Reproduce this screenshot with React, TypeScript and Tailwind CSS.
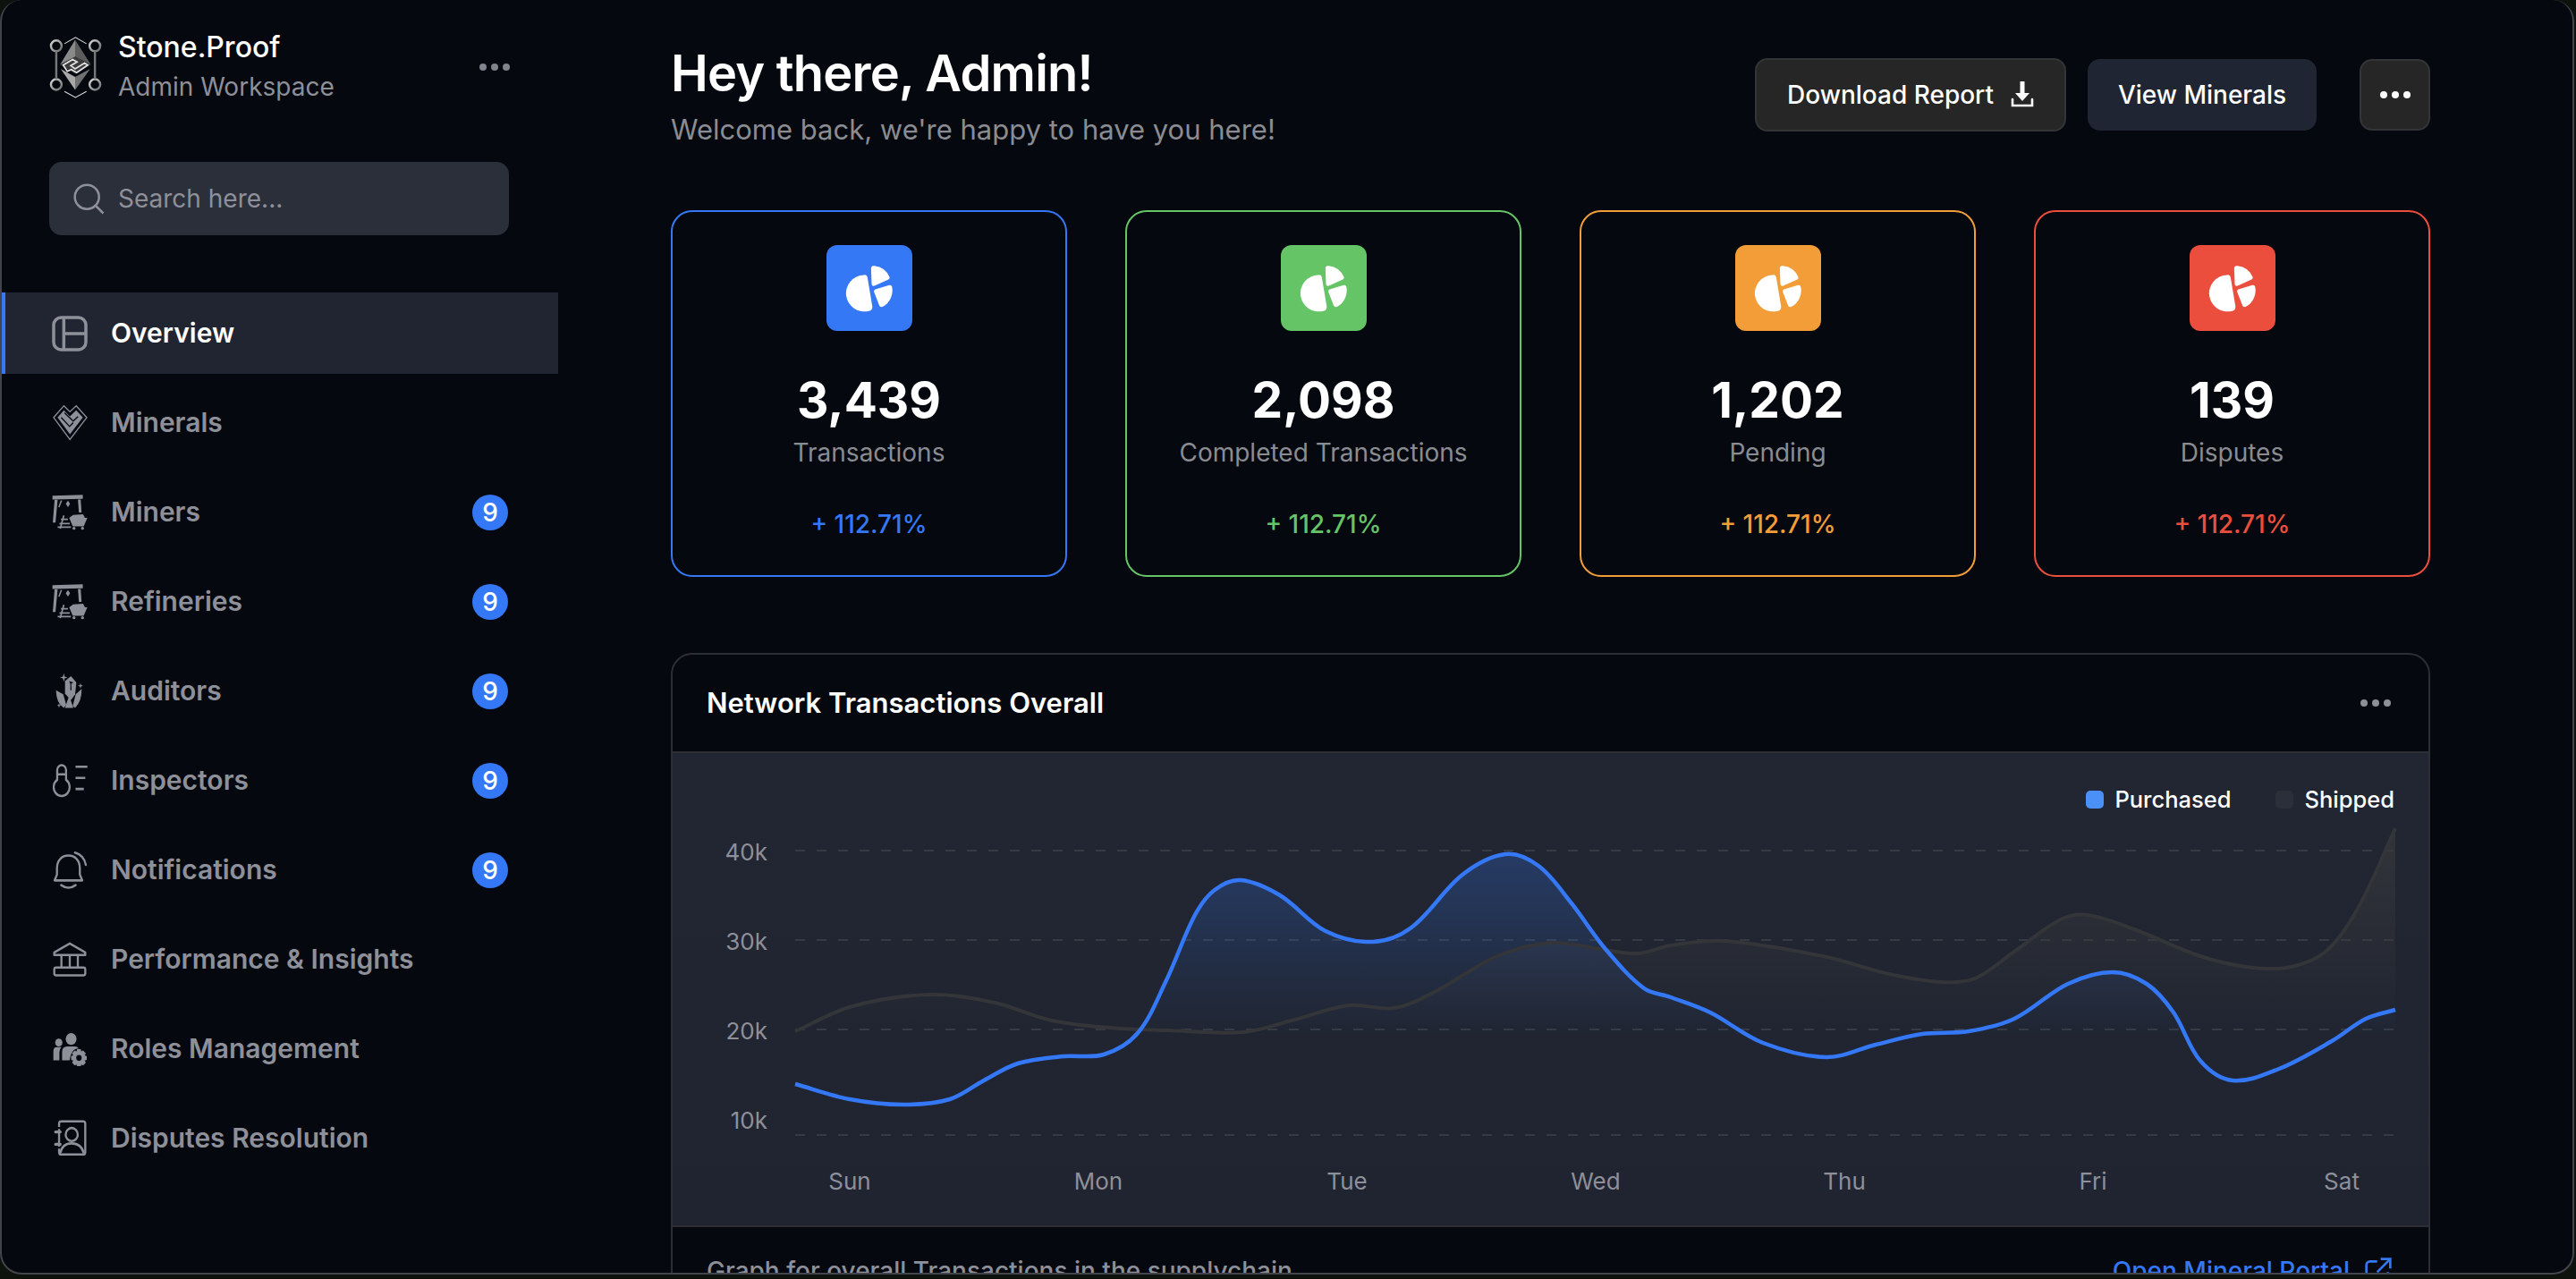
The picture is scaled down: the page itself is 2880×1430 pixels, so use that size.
import { ReactNode } from 'react'

const bluePoints = [
  [889, 1212], [950, 1229], [1010, 1235], [1062, 1229], [1100, 1208], [1138, 1189], [1189, 1181], [1234, 1179],
  [1272, 1155], [1304, 1096], [1336, 1023], [1358, 995], [1387, 984], [1431, 1001], [1482, 1041], [1535, 1053],
  [1578, 1037], [1635, 978], [1683, 955], [1720, 968], [1757, 1010], [1794, 1060], [1838, 1105], [1868, 1115],
  [1912, 1132], [1971, 1166], [2042, 1182], [2097, 1168], [2149, 1156], [2201, 1153], [2252, 1139], [2312, 1100],
  [2362, 1087], [2400, 1100], [2430, 1132], [2460, 1186], [2496, 1208], [2548, 1195], [2607, 1164], [2645, 1139],
  [2678, 1129],
]

const grayPoints = [
  [889, 1153], [953, 1125], [1042, 1112], [1112, 1121], [1176, 1141], [1240, 1149], [1304, 1152], [1390, 1154],
  [1444, 1141], [1508, 1124], [1559, 1127], [1604, 1109], [1674, 1069], [1736, 1054], [1794, 1062], [1831, 1066],
  [1868, 1057], [1927, 1052], [2038, 1069], [2112, 1089], [2171, 1098], [2208, 1094], [2252, 1064], [2304, 1028],
  [2334, 1023], [2386, 1039], [2460, 1069], [2511, 1081], [2556, 1082], [2600, 1064], [2637, 1014], [2678, 926],
]

// tangents scaled by segment length so uneven point spacing doesn't kink the line
function smoothPath(pts: number[][]) {
  let d = `M${pts[0][0]} ${pts[0][1]}`
  for (let i = 0; i < pts.length - 1; i++) {
    const p0 = pts[i - 1] || pts[i]
    const p1 = pts[i]
    const p2 = pts[i + 1]
    const p3 = pts[i + 2] || p2
    const len = Math.hypot(p2[0] - p1[0], p2[1] - p1[1]) / 3
    const l1 = Math.hypot(p2[0] - p0[0], p2[1] - p0[1]) || 1
    const l2 = Math.hypot(p3[0] - p1[0], p3[1] - p1[1]) || 1
    const c1x = p1[0] + ((p2[0] - p0[0]) / l1) * len
    const c1y = p1[1] + ((p2[1] - p0[1]) / l1) * len
    const c2x = p2[0] - ((p3[0] - p1[0]) / l2) * len
    const c2y = p2[1] - ((p3[1] - p1[1]) / l2) * len
    d += ` C${c1x} ${c1y} ${c2x} ${c2y} ${p2[0]} ${p2[1]}`
  }
  return d
}

function Dots({ className }: { className: string }) {
  return (
    <span className={`flex items-center gap-[5px] ${className}`}>
      <span className="size-[8px] rounded-full bg-current" />
      <span className="size-[8px] rounded-full bg-current" />
      <span className="size-[8px] rounded-full bg-current" />
    </span>
  )
}

function Logo() {
  return (
    <svg width="60" height="72" viewBox="75 60 170 205" className="shrink-0" fill="none">
      <defs>
        <linearGradient id="ring" x1="0" y1="0" x2="1" y2="1">
          <stop offset="0" stopColor="#d8d8d8" />
          <stop offset="1" stopColor="#6b6b6b" />
        </linearGradient>
      </defs>
      <g stroke="url(#ring)" strokeWidth="7">
        <circle cx="100" cy="95" r="17" />
        <circle cx="223" cy="95" r="17" />
        <circle cx="100" cy="218" r="17" />
        <circle cx="223" cy="218" r="17" />
      </g>
      <path d="M100 112V201M223 112V201" stroke="#777" strokeWidth="7" />
      <path d="M126 88L161 68L196 88M126 240L161 259L196 240" stroke="#ddd" strokeWidth="3" />
      <path d="M160 76L112 155L160 130Z" fill="#8a8a8a" />
      <path d="M160 76L210 155L160 130Z" fill="#5c5c5c" />
      <path d="M112 155L160 130L210 155L160 184Z" fill="#3c3c3c" />
      <path d="M114 168L160 194V235Z" fill="#a8a8a8" />
      <path d="M208 168L160 194V235Z" fill="#707070" />
      <path d="M122 156L152 138L166 146L146 158L160 168L190 150L200 156L165 180L148 170L135 176Z" fill="none" stroke="#e0e0e0" strokeWidth="5" />
    </svg>
  )
}

function OverviewIcon() {
  return (
    <svg width="40" height="40" viewBox="0 0 24 24" fill="none" stroke="currentColor" strokeWidth="2.1">
      <rect x="1.2" y="1.2" width="21.6" height="21.6" rx="5" />
      <path d="M8 1.5V22.5M8 12H22.5" />
    </svg>
  )
}

function MineralsIcon() {
  return (
    <svg width="39" height="41" viewBox="56 364 116 122" fill="none">
      <path d="M59 408L93 369L113 389L134 369L169 408L113 481Z" stroke="currentColor" strokeWidth="4" />
      <path d="M72 408L93 384L113 404L134 384L156 408L113 464Z" fill="currentColor" />
      <path d="M95 392L124 420L140 405M84 408L112 438L124 425" stroke="#05080f" strokeWidth="4" />
    </svg>
  )
}

function MinerIcon() {
  return (
    <svg width="40" height="40" viewBox="55 668 118 118" fill="currentColor">
      <path d="M57 672L157 669V682L57 684Z" />
      <path d="M64 685H74L67 760H58Z" />
      <path d="M141 684H150L153 727H144Z" />
      <path d="M84 687L89 688L80 710L76 709Z" />
      <path d="M108 688L115 698L108 709L101 698Z" />
      <path d="M112 745L125 735L158 733L164 745H172L160 773H124Z" />
      <circle cx="128" cy="779" r="5" />
      <circle cx="156" cy="779" r="5" />
      <path d="M92 736L97 737L85 781L80 780ZM85 747H108V752H85ZM80 761H114V766H80ZM74 773H118V778H74Z" />
    </svg>
  )
}

function AuditorIcon() {
  return (
    <svg width="32" height="41" viewBox="64 58 96 112" preserveAspectRatio="none" fill="currentColor">
      <path d="M92 60L95 70L105 73L95 76L92 86L89 76L79 73L89 70Z" />
      <path d="M148 90L150 96L157 98L150 100L148 107L146 100L139 98L146 96Z" />
      <path d="M76 152L78 156L83 158L78 160L76 165L74 160L69 158L74 156Z" />
      <path d="M116 69L134 88L130 124L116 142L96 122L96 84Z" />
      <path d="M66 112L90 124L100 156L92 166Q66 150 66 112Z" />
      <path d="M152 108L132 124L122 160L130 166Q152 146 152 108Z" />
      <path d="M110 128L124 166H96Z" />
      <path d="M110 84L124 88L117 92L118 112H114L114 93Z" fill="#05080f" />
    </svg>
  )
}

function InspectorIcon() {
  return (
    <svg width="39" height="38" viewBox="55 333 118 104" preserveAspectRatio="none" fill="none" stroke="currentColor" strokeWidth="7">
      <path d="M70 382V352A15 15 0 0 1 100 352V382A27 27 0 1 1 70 382Z" />
      <path d="M72 365H98M132 342H172M132 376H165M132 410H160" />
    </svg>
  )
}

function BellIcon() {
  return (
    <svg width="39" height="43" viewBox="62 592 116 116" preserveAspectRatio="none" fill="none" stroke="currentColor" strokeWidth="7" strokeLinecap="round">
      <path d="M68 682H160L152 664V645C152 622 136 607 114 607C92 607 76 622 76 645V664Z" strokeLinejoin="round" />
      <path d="M90 696Q114 712 138 696M136 598Q166 606 172 635" />
    </svg>
  )
}

function BankIcon() {
  return (
    <svg width="38" height="39" viewBox="58 868 114 106" preserveAspectRatio="none" fill="none" stroke="currentColor" strokeWidth="7" strokeLinejoin="round">
      <path d="M63 908V900L115 873L167 900V908Z" />
      <path d="M87 908V946M115 908V946M142 908V946" />
      <rect x="63" y="946" width="104" height="24" rx="6" />
    </svg>
  )
}

function RolesIcon() {
  return (
    <svg width="39" height="38" viewBox="56 1142 116 104" preserveAspectRatio="none" fill="currentColor">
      <circle cx="117" cy="1163" r="18" />
      <circle cx="76" cy="1174" r="12" />
      <path d="M58 1228V1200Q58 1188 70 1188H85Q78 1194 78 1204V1228Z" />
      <path d="M87 1228V1203Q87 1186 104 1186H130Q138 1186 142 1192Q118 1192 112 1228Z" />
      <path
        d="M137 1194H149L151 1201L157 1198L166 1207L162 1213L169 1215V1227L162 1229L166 1235L157 1244L151 1241L149 1248H137L135 1241L129 1244L120 1235L124 1229L117 1227V1215L124 1213L120 1207L129 1198L135 1201Z"
      />
      <circle cx="143" cy="1221" r="9" fill="#05080f" />
    </svg>
  )
}

function DisputesIcon() {
  return (
    <svg width="37" height="41" viewBox="60 1408 110 112" preserveAspectRatio="none" fill="none" stroke="currentColor" strokeWidth="7" strokeLinejoin="round">
      <path d="M78 1430V1420Q78 1413 85 1413H158Q165 1413 165 1420V1506Q165 1514 158 1514H85Q78 1514 78 1506V1496" />
      <path d="M78 1436V1490" strokeWidth="7" />
      <circle cx="120" cy="1453" r="20" />
      <path d="M82 1510Q88 1480 120 1480Q152 1480 160 1510" />
      <path d="M66 1445H82M66 1483H82" strokeWidth="9" strokeLinecap="round" />
    </svg>
  )
}

function PieIcon() {
  return (
    <svg width="57" height="57" viewBox="130 100 170 170" fill="white">
      <path d="M198 140Q208 137 210 148L226 243Q228 258 215 260A61 61 0 1 1 198 140Z" />
      <path d="M222 118Q223 107 233 110A62 62 0 0 1 284 148Q285 153 280 155L232 177Q224 178 224 170Z" />
      <path d="M232 197Q231 190 236 188L283 174Q290 172 292 180A62 62 0 0 1 263 245Q255 250 250 243Z" />
    </svg>
  )
}

type NavItem = { label: string; icon: ReactNode; badge?: boolean; active?: boolean }

const navItems: NavItem[] = [
  { label: 'Overview', icon: <OverviewIcon />, active: true },
  { label: 'Minerals', icon: <MineralsIcon /> },
  { label: 'Miners', icon: <MinerIcon />, badge: true },
  { label: 'Refineries', icon: <MinerIcon />, badge: true },
  { label: 'Auditors', icon: <AuditorIcon />, badge: true },
  { label: 'Inspectors', icon: <InspectorIcon />, badge: true },
  { label: 'Notifications', icon: <BellIcon />, badge: true },
  { label: 'Performance & Insights', icon: <BankIcon /> },
  { label: 'Roles Management', icon: <RolesIcon /> },
  { label: 'Disputes Resolution', icon: <DisputesIcon /> },
]

function Sidebar() {
  return (
    <aside className="w-[622px] shrink-0 pt-[39px]">
      <div className="flex h-[72px] items-center pl-[52px] pr-[54px]">
        <Logo />
        <div className="ml-[18px] flex-1">
          <p className="text-[32px] leading-[38px] font-medium text-white">Stone.Proof</p>
          <p className="mt-[6px] text-[28px] leading-[38px] text-[#8e9099]">Admin Workspace</p>
        </div>
        <Dots className="text-[#81848c]" />
      </div>
      <div className="ml-[53px] mr-[55px] mt-[70px] flex h-[82px] items-center gap-[15px] rounded-[14px] bg-[#2b2f3a] pl-[26px] text-[#8e9099]">
        <svg width="36" height="36" viewBox="0 0 24 24" fill="none" stroke="currentColor" strokeWidth="1.7">
          <circle cx="10.8" cy="10.8" r="9" />
          <path d="M17.5 17.5L23 23" />
        </svg>
        <span className="text-[28px]">Search here...</span>
      </div>
      <nav className="mt-[64px] flex flex-col gap-[9px]">
        {navItems.map((item) => (
          <div
            key={item.label}
            className={`flex h-[91px] items-center border-l-[4px] pl-[52px] pr-[56px] ${
              item.active ? 'border-[#3478f6] bg-[#202531]' : 'border-transparent'
            }`}
          >
            <span className="flex w-[40px] justify-center text-[#8e9099]">{item.icon}</span>
            <span
              className={`ml-[26px] flex-1 text-[30px] font-semibold ${item.active ? 'text-white' : 'text-[#8e9099]'}`}
            >
              {item.label}
            </span>
            {item.badge && (
              <span className="flex size-[40px] items-center justify-center rounded-full bg-[#3478f6] text-[28px] font-medium text-white">
                9
              </span>
            )}
          </div>
        ))}
      </nav>
    </aside>
  )
}

const stats = [
  { value: '3,439', label: 'Transactions', border: 'border-[#3478f6]', bg: 'bg-[#3478f6]', text: 'text-[#3478f6]' },
  { value: '2,098', label: 'Completed Transactions', border: 'border-[#65c466]', bg: 'bg-[#65c466]', text: 'text-[#65c466]' },
  { value: '1,202', label: 'Pending', border: 'border-[#f29d38]', bg: 'bg-[#f29d38]', text: 'text-[#f29d38]' },
  { value: '139', label: 'Disputes', border: 'border-[#eb4e3d]', bg: 'bg-[#eb4e3d]', text: 'text-[#eb4e3d]' },
]

function Chart() {
  const blue = smoothPath(bluePoints)
  const gray = smoothPath(grayPoints)
  return (
    <svg width="1963" height="528" viewBox="752 842 1963 528" className="block">
      <defs>
        <linearGradient id="blueFill" x1="0" y1="0" x2="0" y2="1">
          <stop offset="0" stopColor="#3478f6" stopOpacity="0.26" />
          <stop offset="0.65" stopColor="#3478f6" stopOpacity="0" />
        </linearGradient>
        <linearGradient id="grayFill" x1="0" y1="0" x2="0" y2="1">
          <stop offset="0" stopColor="#3a3a3d" stopOpacity="0.7" />
          <stop offset="0.65" stopColor="#3a3a3d" stopOpacity="0" />
        </linearGradient>
      </defs>
      {[951, 1051, 1151, 1269].map((y) => (
        <line key={y} x1="889" x2="2678" y1={y} y2={y} stroke="#363a42" strokeWidth="2" strokeDasharray="11 13" />
      ))}
      <path d={`${gray} L2678 1269 L889 1269 Z`} fill="url(#grayFill)" />
      <path d={`${blue} L2678 1269 L889 1269 Z`} fill="url(#blueFill)" />
      <path d={gray} fill="none" stroke="#333539" strokeWidth="4" />
      <path d={blue} fill="none" stroke="#3478f6" strokeWidth="4.5" />
      <g fill="#8e9099" fontSize="26" textAnchor="end">
        <text x="858" y="962">40k</text>
        <text x="858" y="1062">30k</text>
        <text x="858" y="1162">20k</text>
        <text x="858" y="1262">10k</text>
      </g>
      <g fill="#8e9099" fontSize="26" textAnchor="middle">
        <text x="950" y="1330">Sun</text>
        <text x="1228" y="1330">Mon</text>
        <text x="1506" y="1330">Tue</text>
        <text x="1784" y="1330">Wed</text>
        <text x="2062" y="1330">Thu</text>
        <text x="2340" y="1330">Fri</text>
        <text x="2618" y="1330">Sat</text>
      </g>
    </svg>
  )
}

function Main() {
  return (
    <main className="min-w-0 flex-1 pl-[126px] pr-[159px] pt-[48px]">
      <div className="flex h-[187px] items-start justify-between">
        <div>
          <h1 className="text-[56px] leading-[68px] font-semibold tracking-[-0.8px] text-white">Hey there, Admin!</h1>
          <p className="mt-[7px] text-[31px] leading-[44px] text-[#8a8c92]">Welcome back, we're happy to have you here!</p>
        </div>
        <div className="mt-[17px] flex items-center">
          <button className="flex h-[82px] w-[348px] items-center justify-center gap-[19px] rounded-[14px] border-2 border-[#333436] bg-[#262626] text-[28px] font-medium text-white">
            Download Report
            <svg width="26" height="30" viewBox="0 0 26 30" fill="none">
              <path d="M13 1V17" stroke="white" strokeWidth="5" strokeLinecap="round" />
              <path d="M5 13H21L13 22Z" fill="white" />
              <path d="M2 20V27H24V20" stroke="white" strokeWidth="2.6" strokeLinecap="round" />
            </svg>
          </button>
          <button className="ml-[24px] flex h-[80px] w-[256px] items-center justify-center rounded-[14px] bg-[#1f2532] text-[28px] font-medium text-white">
            View Minerals
          </button>
          <button className="ml-[48px] flex h-[80px] w-[79px] items-center justify-center rounded-[14px] border-2 border-[#333436] bg-[#262626] text-white">
            <Dots className="" />
          </button>
        </div>
      </div>
      <div className="grid grid-cols-4 gap-[65px]">
        {stats.map((s) => (
          <div
            key={s.label}
            className={`flex h-[410px] flex-col items-center rounded-[24px] border-2 pt-[37px] ${s.border}`}
          >
            <div className={`flex size-[96px] items-center justify-center rounded-[12px] ${s.bg}`}>
              <PieIcon />
            </div>
            <p className="mt-[43px] text-[55px] leading-[68px] font-bold text-white">{s.value}</p>
            <p className="mt-[5px] text-[28px] leading-[40px] text-[#8a8c92]">{s.label}</p>
            <p className={`mt-[42px] text-[28px] leading-[36px] font-medium ${s.text}`}>+ 112.71%</p>
          </div>
        ))}
      </div>
      <div className="mt-[85px] rounded-t-[24px] border-2 border-[#2c2e33]">
        <div className="flex h-[108px] items-center justify-between pl-[38px] pr-[42px]">
          <h2 className="text-[31px] font-semibold text-white">Network Transactions Overall</h2>
          <Dots className="text-[#8e9099]" />
        </div>
        <div className="relative border-y-2 border-[#2c2e33] bg-gradient-to-b from-[#212632] to-[#1f2430]">
          <div className="absolute right-[38px] top-[35px] flex items-center text-[25.5px] leading-[34px] font-medium text-white">
            <span className="size-[20px] rounded-[5px] bg-[#4a90f7]" />
            <span className="ml-[12px]">Purchased</span>
            <span className="ml-[50px] size-[20px] rounded-[5px] bg-[#2b2f3a]" />
            <span className="ml-[12px]">Shipped</span>
          </div>
          <Chart />
        </div>
        <div className="flex h-[98px] items-center justify-between pl-[38px] pr-[40px]">
          <span className="text-[28px] font-medium text-[#8e9099]">Graph for overall Transactions in the supplychain</span>
          <span className="flex items-center gap-[16px] text-[28px] font-medium text-[#3478f6]">
            Open Mineral Portal
            <svg width="32" height="32" viewBox="0 0 24 24" fill="none" stroke="currentColor" strokeWidth="2">
              <path d="M11 4H5a3 3 0 0 0-3 3v12a3 3 0 0 0 3 3h12a3 3 0 0 0 3-3v-6M14 2h8v8M22 2L11 13" />
            </svg>
          </span>
        </div>
      </div>
    </main>
  )
}

export default function App() {
  return (
    <div className="h-[1430px] w-[2880px] overflow-hidden bg-[#0d120c] font-['Inter',sans-serif]">
      <div className="flex h-[1425px] w-[2878px] overflow-hidden rounded-[24px] border-x-2 border-b-2 border-[#43444c] bg-[#05080f]">
        <Sidebar />
        <Main />
      </div>
    </div>
  )
}
